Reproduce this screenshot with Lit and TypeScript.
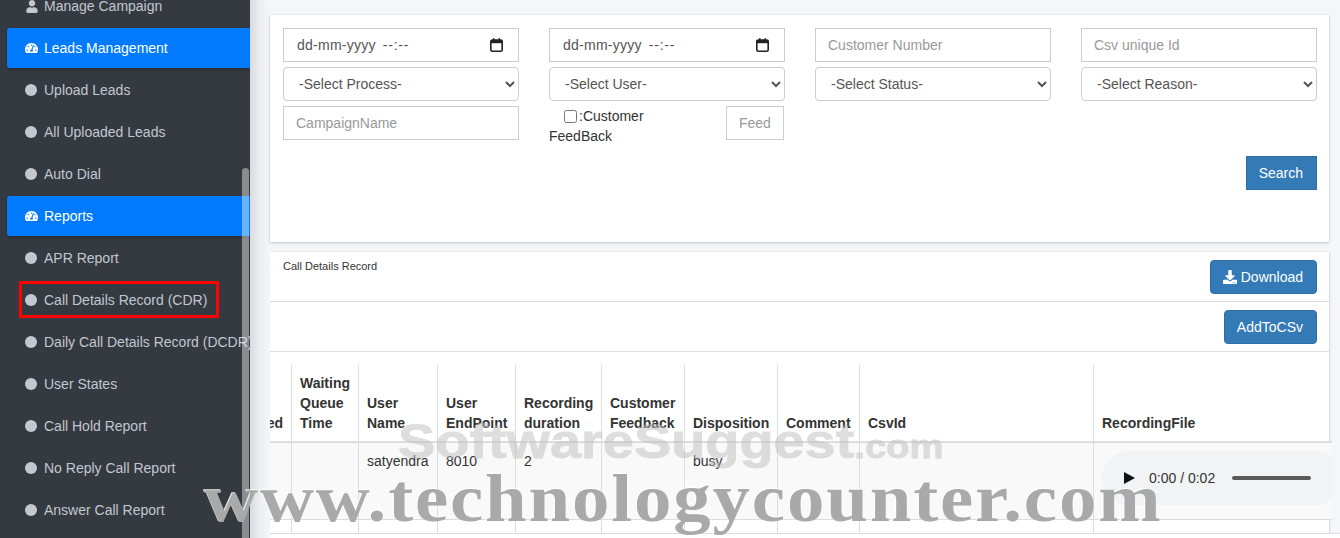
import { LitElement, html, css, svg } from "lit";
import { customElement } from "lit/decorators.js";

const gauge = svg`<path d="M288 32C128.94 32 0 160.94 0 320c0 52.8 14.25 102.26 39.06 144.8 5.61 9.62 16.3 15.2 27.44 15.2h443c11.14 0 21.83-5.58 27.44-15.2C561.75 422.26 576 372.8 576 320c0-159.06-128.94-288-288-288zm0 64c14.71 0 26.58 10.13 30.32 23.65-1.11 2.26-2.64 4.23-3.45 6.67l-9.22 27.67c-5.13 3.49-10.97 6.01-17.64 6.01-17.67 0-32-14.33-32-32S270.33 96 288 96zM96 384c-17.67 0-32-14.33-32-32s14.33-32 32-32 32 14.33 32 32-14.33 32-32 32zm48-160c-17.67 0-32-14.33-32-32s14.33-32 32-32 32 14.33 32 32-14.33 32-32 32zm246.77-72.41l-61.33 184C343.13 347.33 352 364.54 352 384c0 11.72-3.38 22.55-8.88 32H232.88c-5.5-9.45-8.88-20.28-8.88-32 0-33.94 26.5-61.43 59.9-63.59l61.34-184.01c4.17-12.56 17.73-19.45 30.36-15.17 12.57 4.19 19.35 17.77 15.17 30.36zm14.66 57.2l15.52-46.55c3.47-1.29 7.13-2.23 11.05-2.23 17.67 0 32 14.33 32 32s-14.33 32-32 32c-11.38-.01-20.89-6.28-26.57-15.22zM480 384c-17.67 0-32-14.33-32-32s14.33-32 32-32 32 14.33 32 32-14.33 32-32 32z"/>`;
const user = svg`<path d="M224 256c70.7 0 128-57.3 128-128S294.7 0 224 0 96 57.3 96 128s57.3 128 128 128zm89.6 32h-16.7c-22.2 10.2-46.9 16-72.9 16s-50.6-5.8-72.9-16h-16.7C60.2 288 0 348.2 0 422.4V464c0 26.5 21.5 48 48 48h352c26.5 0 48-21.5 48-48v-41.6c0-74.2-60.2-134.4-134.4-134.4z"/>`;
const download = svg`<path d="M216 0h80c13.3 0 24 10.7 24 24v168h87.7c17.8 0 26.7 21.5 14.1 34.1L269.7 378.3c-7.5 7.5-19.8 7.5-27.3 0L90.1 226.1c-12.6-12.6-3.7-34.1 14.1-34.1H192V24c0-13.3 10.7-24 24-24zm296 376v112c0 13.3-10.7 24-24 24H24c-13.3 0-24-10.7-24-24V376c0-13.3 10.7-24 24-24h146.7l49 49c20.1 20.1 52.5 20.1 72.6 0l49-49H488c13.3 0 24 10.7 24 24zm-124 88c0-11-9-20-20-20s-20 9-20 20 9 20 20 20 20-9 20-20zm64 0c0-11-9-20-20-20s-20 9-20 20 9 20 20 20 20-9 20-20z"/>`;

const subItems = (names: string[], marked = "") =>
  names.map(
    (n) => html`<div class="item">
      <span class="dot"></span><span class="label">${n}</span>
      ${n === marked ? html`<span class="mark"></span>` : ""}
    </div>`
  );

const dateField = () => html`<div class="date">
  <span class="date-text">dd-mm-yyyy</span><span class="date-time">--:--</span>
  <svg class="cal" viewBox="0 0 13 14" aria-hidden="true">
    <rect x="0.8" y="2" width="11.4" height="11.2" rx="1.5" fill="none" stroke="#222" stroke-width="1.6"/>
    <rect x="0.8" y="2" width="11.4" height="3.2" fill="#222"/>
    <rect x="3" y="0.2" width="1.5" height="2.4" fill="#222"/>
    <rect x="8.5" y="0.2" width="1.5" height="2.4" fill="#222"/>
  </svg>
</div>`;

const headers: [string, string][] = [
  ["ed", "w0"],
  ["Waiting Queue Time", "w1"],
  ["User Name", "w2"],
  ["User EndPoint", "w3"],
  ["Recording duration", "w4"],
  ["Customer Feedback", "w5"],
  ["Disposition", "w6"],
  ["Comment", "w7"],
  ["CsvId", "w8"],
  ["RecordingFile", "w9"],
];

@customElement("app-root")
export class AppRoot extends LitElement {
  static styles = css`
    :host {
      display: block;
      width: 1340px;
      height: 538px;
      overflow: hidden;
      position: relative;
      font-family: "Liberation Sans", Arial, sans-serif;
      font-size: 14px;
      color: #333;
      background: #f4f6f9;
    }
    * { box-sizing: border-box; }
    .page { display: flex; height: 538px; }

    .side {
      width: 250px;
      flex: none;
      height: 538px;
      background: #343a40;
      overflow: hidden;
      position: relative;
      color: #c2c7d0;
      padding: 0 0 0 7px;
    }
    .nav { margin-top: -15px; }
    .item {
      position: relative;
      height: 42px;
      display: flex;
      align-items: center;
      padding-left: 18px;
      white-space: nowrap;
    }
    .dot {
      width: 12px;
      height: 12px;
      border-radius: 50%;
      background: #c2c7d0;
      flex: none;
      margin-right: 7px;
    }
    .ico {
      width: 13px;
      height: 12px;
      fill: currentColor;
      flex: none;
      margin-right: 6px;
    }
    .ico.u { width: 12px; margin-left: 1px; margin-right: 6px; height: 13px; }
    .item.active {
      background: #007bff;
      color: #fff;
      height: 40px;
      margin: 1px 0;
      box-shadow: 0 1px 3px rgba(0, 0, 0, 0.3);
      border-radius: 2px 0 0 2px;
    }
    .mark {
      position: absolute;
      left: 12px;
      top: 2px;
      width: 200px;
      height: 37px;
      border: 3px solid #f00;
    }
    .thumb {
      position: absolute;
      left: 242px;
      top: 168px;
      width: 7px;
      height: 380px;
      border-radius: 4px;
      background: rgba(255, 255, 255, 0.42);
    }

    .main {
      flex: 1;
      min-width: 0;
      position: relative;
      overflow: hidden;
      padding: 15px 11px 0 20px;
      background: linear-gradient(90deg, #d9dbde 0, #eceef1 10px, #f4f6f9 20px);
    }
    .card {
      background: #fff;
      box-shadow: 0 0 1px rgba(0, 0, 0, 0.13), 0 1px 3px rgba(0, 0, 0, 0.2);
    }
    .filter {
      height: 227px;
      padding: 13px 12px 0 13px;
    }
    .grid {
      display: grid;
      grid-template-columns: repeat(4, 236px);
      column-gap: 30px;
      row-gap: 5px;
      grid-auto-rows: 34px;
    }
    input, select {
      font-family: "Liberation Sans", Arial, sans-serif;
      font-size: 14px;
      height: 34px;
      width: 100%;
      color: #555;
      background: #fff;
      outline: none;
    }
    input {
      border: 1px solid #ccc;
      border-radius: 0;
      padding: 6px 12px;
    }
    input::placeholder { color: #999; opacity: 1; }
    select {
      border: 1px solid #ccc;
      border-radius: 4px;
      padding: 6px 11px;
    }
    .date {
      height: 34px;
      border: 1px solid #ccc;
      display: flex;
      align-items: center;
      padding: 0 15px 0 13px;
      color: #555;
      background: #fff;
    }
    .date-text { letter-spacing: 0.25px; }
    .date-time { margin-left: 7px; letter-spacing: 0.8px; }
    .cal { width: 13px; height: 14px; margin-left: auto; }
    .fb { display: flex; justify-content: space-between; align-items: flex-start; }
    .fb-text { width: 120px; line-height: 20px; text-indent: 15px; }
    .fb-text input {
      width: 13px;
      height: 13px;
      margin: 0 2px 0 0;
      padding: 0;
      vertical-align: -2px;
      text-indent: 0;
    }
    .fb .feed { width: 58px; margin-right: 1px; }
    .actions { display: flex; justify-content: flex-end; margin-top: 16px; }
    .btn {
      font-family: "Liberation Sans", Arial, sans-serif;
      font-size: 14px;
      height: 34px;
      color: #fff;
      background: #337ab7;
      border: 1px solid #2e6da4;
      padding: 6px 13px 6px 12px;
      display: inline-flex;
      align-items: center;
      border-radius: 4px;
    }
    .btn.square { border-radius: 0; }
    .btn svg { width: 14px; height: 14px; fill: #fff; margin-right: 4px; }

    .records {
      margin-top: 10px;
      height: 290px;
      position: relative;
      clip-path: inset(-2px -4px -2px 0);
    }
    .bar {
      height: 50px;
      border-bottom: 1px solid #ddd;
      display: flex;
      justify-content: space-between;
      padding: 8px 12px 0 13px;
    }
    .title { font-size: 11px; line-height: 12px; color: #333; }
    .bar.right { justify-content: flex-end; height: 50px; }

    table {
      border-collapse: collapse;
      table-layout: fixed;
      width: 1062px;
      margin-top: 13px;
    }
    col.w0 { width: 21.5px; }
    col.w1 { width: 67px; }
    col.w2 { width: 79px; }
    col.w3 { width: 78px; }
    col.w4 { width: 86px; }
    col.w5 { width: 83px; }
    col.w6 { width: 93px; }
    col.w7 { width: 82px; }
    col.w8 { width: 234px; }
    col.w9 { width: 238.5px; }
    th, td {
      border: 1px solid #ddd;
      padding: 8px;
      line-height: 20px;
      vertical-align: bottom;
      text-align: left;
      font-size: 14px;
    }
    th {
      font-weight: bold;
      height: 77px;
      border-top: none;
      border-bottom: 2px solid #ddd;
      color: #333;
    }
    th:first-child, td:first-child { border-left: none; white-space: nowrap; }
    th:first-child { direction: rtl; text-align: right; padding: 8px 8px 8px 0; }
    th:last-child, td:last-child { border-right: none; }
    td { vertical-align: top; height: 77px; }
    .odd td { background: #f9f9f9; }
    .last td { height: 14px; padding: 0; background: #fff; }
    .last td:last-child { background: transparent; }
    .audio {
      display: flex;
      align-items: center;
      width: 240px;
      height: 54px;
      border-radius: 27px;
      background: #f1f3f4;
      padding-left: 22px;
    }
    .audio-cell { padding: 8px 0 0 8px; overflow: hidden; }
    .play { width: 0; height: 0; border-left: 11px solid #111; border-top: 6.5px solid transparent; border-bottom: 6.5px solid transparent; margin-right: 14px; }
    .time { font-size: 14px; color: #333; margin-right: 17px; white-space: nowrap; }
    .track { width: 79px; height: 4px; border-radius: 2px; background: #5a5a5a; }

    .strip {
      position: absolute;
      left: 20px;
      right: 0;
      top: 533px;
      height: 5px;
      background: #fff;
      border-top: 1px solid #ddd;
    }

    .wm1, .wm2 {
      position: absolute;
      white-space: nowrap;
      pointer-events: none;
    }
    .wm1 {
      left: 398px;
      top: 413px;
      transform-origin: left center;
      transform: scaleX(1.14);
      font-family: "Liberation Sans", Arial, sans-serif;
      font-weight: bold;
      font-size: 49px;
      line-height: 56px;
      color: #bebebe;
      -webkit-text-stroke: 0.8px #bebebe;
      opacity: 0.5;
    }
    .wm1 small { font-size: 33.5px; }
    .wm2 {
      left: 204px;
      top: 459px;
      transform-origin: left center;
      transform: scaleX(1.1);
      font-family: "Liberation Serif", "Times New Roman", serif;
      font-weight: bold;
      font-size: 68px;
      line-height: 78px;
      letter-spacing: 1.71px;
      color: #a9a9a9;
      text-shadow: -1px -1px 0 rgba(255, 255, 255, 0.85);
    }
  `;

  render() {
    return html`
      <div class="page">
        <aside class="side">
          <div class="nav">
            <div class="item"><svg class="ico u" viewBox="0 0 448 512">${user}</svg><span class="label">Manage Campaign</span></div>
            <div class="item active"><svg class="ico" viewBox="0 0 576 512">${gauge}</svg><span class="label">Leads Management</span></div>
            ${subItems(["Upload Leads", "All Uploaded Leads", "Auto Dial"])}
            <div class="item active"><svg class="ico" viewBox="0 0 576 512">${gauge}</svg><span class="label">Reports</span></div>
            ${subItems(
              [
                "APR Report",
                "Call Details Record (CDR)",
                "Daily Call Details Record (DCDR)",
                "User States",
                "Call Hold Report",
                "No Reply Call Report",
                "Answer Call Report",
              ],
              "Call Details Record (CDR)"
            )}
          </div>
          <div class="thumb"></div>
        </aside>
        <main class="main">
          <section class="card filter">
            <div class="grid">
              ${dateField()}
              ${dateField()}
              <input type="text" placeholder="Customer Number" />
              <input type="text" placeholder="Csv unique Id" />
              <select><option>-Select Process-</option></select>
              <select><option>-Select User-</option></select>
              <select><option>-Select Status-</option></select>
              <select><option>-Select Reason-</option></select>
              <input type="text" placeholder="CampaignName" />
              <div class="fb">
                <div class="fb-text"><input type="checkbox" />:Customer FeedBack</div>
                <input class="feed" type="text" placeholder="Feed" />
              </div>
            </div>
            <div class="actions"><button class="btn square">Search</button></div>
          </section>
          <section class="card records">
            <div class="bar">
              <div class="title">Call Details Record</div>
              <button class="btn"><svg viewBox="0 0 512 512">${download}</svg>Download</button>
            </div>
            <div class="bar right"><button class="btn">AddToCSv</button></div>
            <table>
              <colgroup>${headers.map(([, w]) => html`<col class=${w} />`)}</colgroup>
              <thead>
                <tr>${headers.map(([h]) => html`<th>${h}</th>`)}</tr>
              </thead>
              <tbody>
                <tr class="odd">
                  <td></td><td></td>
                  <td>satyendra</td><td>8010</td><td>2</td><td></td><td>busy</td><td></td><td></td>
                  <td class="audio-cell">
                    <div class="audio">
                      <span class="play"></span><span class="time">0:00 / 0:02</span><span class="track"></span>
                    </div>
                  </td>
                </tr>
                <tr class="last"><td></td><td></td><td></td><td></td><td></td><td></td><td></td><td></td><td></td><td></td></tr>
              </tbody>
            </table>
          </section>
          <div class="strip"></div>
        </main>
      </div>
      <div class="wm1">SoftwareSuggest<small>.com</small></div>
      <div class="wm2">www.technologycounter.com</div>
    `;
  }
}
